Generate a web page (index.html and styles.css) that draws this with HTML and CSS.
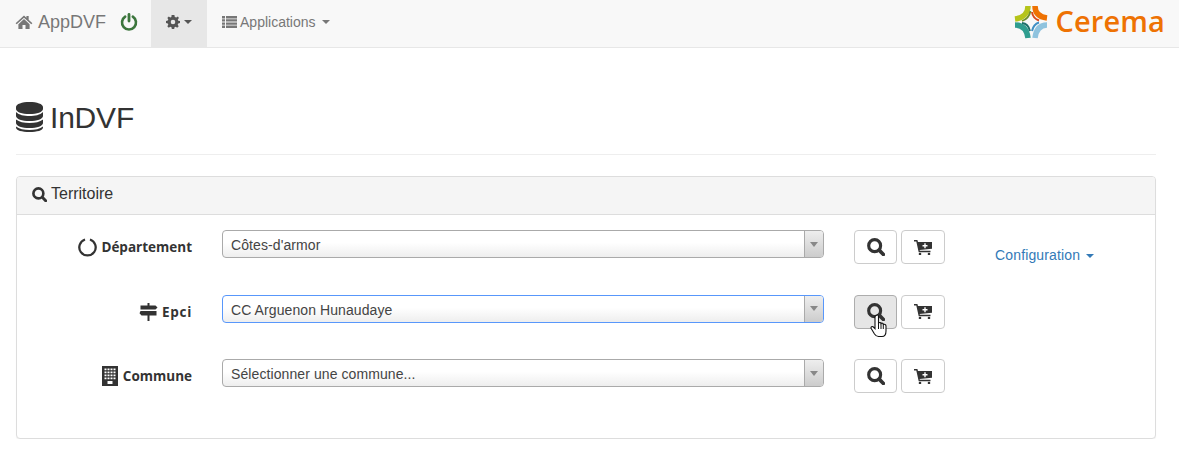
FILE: index.html
```html
<!DOCTYPE html>
<html lang="fr">
<head>
<meta charset="utf-8">
<title>InDVF</title>
<link rel="stylesheet" href="styles.css">
</head>
<body>
<nav class="navbar">
  <a class="brand">
    <svg class="ico-home" viewBox="0 0 18 15"><path d="M9 0.5 L11.6 2.9 V1.2 H14 V5.1 L18 8.8 L16.8 10 L9 3 L1.2 10 L0 8.8 Z M3 9.8 L9 4.4 L15 9.8 V15 H10.6 V10.8 H7.4 V15 H3 Z"/></svg>
    <span>AppDVF</span>
  </a>
  <svg class="ico-power" viewBox="0 0 18 18"><path d="M5.2 3.6 A7 7 0 1 0 12.8 3.6" fill="none" stroke="#3c763d" stroke-width="2.6" stroke-linecap="round"/><path d="M9 1.4 V8" fill="none" stroke="#3c763d" stroke-width="2.8" stroke-linecap="round"/></svg>
  <a class="nav-item active">
    <svg class="ico-gear" viewBox="0 0 14 14"><path fill-rule="evenodd" d="M5.6 0 H8.4 L8.8 1.9 L10.3 2.5 L11.9 1.5 L12.9 3 L11.8 4.5 L12.2 5.7 L14 6 V8.1 L12.2 8.5 L11.7 9.8 L12.7 11.3 L11.2 12.7 L9.7 11.7 L8.5 12.2 L8.2 14 H5.8 L5.5 12.2 L4.2 11.7 L2.8 12.7 L1.3 11.2 L2.3 9.7 L1.8 8.5 L0 8.1 V5.9 L1.8 5.6 L2.3 4.3 L1.3 2.9 L2.8 1.4 L4.2 2.4 L5.4 1.9 Z M7 4.7 A2.3 2.3 0 1 0 7 9.3 A2.3 2.3 0 1 0 7 4.7 Z"/></svg>
    <span class="caret"></span>
  </a>
  <a class="nav-item apps">
    <svg class="ico-list" viewBox="0 0 15 12"><path d="M0 0H3V2.4H0Z M4 0H15V2.4H4Z M0 3.2H3V5.6H0Z M4 3.2H15V5.6H4Z M0 6.4H3V8.8H0Z M4 6.4H15V8.8H4Z M0 9.6H3V12H0Z M4 9.6H15V12H4Z"/></svg>
    <span>Applications</span>
    <span class="caret"></span>
  </a>
  <div class="logo">
    <svg class="logo-mark" viewBox="0 0 34 35" fill="none">
      <path d="M14 2 C14 9 9 14 1 15" stroke="#b5c41a" stroke-width="5.5"/>
      <path d="M16.5 7 C15.5 12 12.5 15.5 8 17" stroke="#6f8f2a" stroke-width="1.8"/>
      <path d="M21 2 C21 9 25 13 33 14" stroke="#ee7203" stroke-width="5.5"/>
      <path d="M18 8 C18.5 12 21 15 25 16.5" stroke="#d9481c" stroke-width="2"/>
      <path d="M1 21 C9 21 13 26 14 34" stroke="#2f9d8f" stroke-width="5.5"/>
      <path d="M8 19 C12 19.5 15 22.5 16 27" stroke="#1d6f6a" stroke-width="1.8"/>
      <path d="M33 21 C26 21 22 26 21 34" stroke="#8fc3de" stroke-width="5.5"/>
      <path d="M25 18.5 C21.5 19.5 19 22.5 18 27" stroke="#3f8fc4" stroke-width="2"/>
    </svg>
    <span class="logo-text">Cerema</span>
  </div>
</nav>

<main class="page">
  <header class="page-header">
    <svg class="ico-db" viewBox="0 0 27 30"><path d="M13.5 0 C21 0 27 2 27 5 V7 C27 10 21 12 13.5 12 C6 12 0 10 0 7 V5 C0 2 6 0 13.5 0 Z M0 10 C3 13 8 14 13.5 14 C19 14 24 13 27 10 V14 C27 17 21 19 13.5 19 C6 19 0 17 0 14 Z M0 17.5 C3 20 8 21 13.5 21 C19 21 24 20 27 17.5 V21 C27 24 21 26 13.5 26 C6 26 0 24 0 21 Z M0 24.5 C3 27 8 28 13.5 28 C19 28 24 27 27 24.5 V25.5 C27 28.5 21 30 13.5 30 C6 30 0 28.5 0 25.5 Z"/></svg>
    <h1>InDVF</h1>
  </header>

  <section class="panel">
    <div class="panel-heading">
      <svg class="ico-search small" viewBox="0 0 16 16"><circle cx="6.8" cy="6.8" r="5.3" fill="none" stroke-width="2.8"/><path d="M11 11 L14.6 14.6" fill="none" stroke-width="3.2" stroke-linecap="round"/></svg>
      <span>Territoire</span>
    </div>
    <div class="panel-body">
      <div class="rows">
        <div class="row">
          <label class="row-label">
            <svg class="ico-dept" viewBox="0 0 20 20"><path d="M7.4 1.6 A8.6 8.6 0 1 0 12.6 1.6" fill="none" stroke="#333" stroke-width="2.4"/></svg>
            <span>Département</span>
          </label>
          <div class="select"><span class="select-value">Côtes-d'armor</span><span class="select-arrow"><i></i></span></div>
          <div class="actions">
            <button class="btn"><svg class="ico-search" viewBox="0 0 16 16"><circle cx="6.8" cy="6.8" r="5.3" fill="none" stroke-width="2.8"/><path d="M11 11 L14.6 14.6" fill="none" stroke-width="3.2" stroke-linecap="round"/></svg></button>
            <button class="btn"><svg class="ico-cart" viewBox="0 0 18 15"><path fill-rule="evenodd" d="M0 0 H3.4 L4 2 H18 V8.8 L5.6 10 L5.9 10.8 H16.5 V12.3 H4.7 L2.3 1.5 H0 Z M10.3 3.2 V5 H8.5 V6.4 H10.3 V8.2 H11.7 V6.4 H13.5 V5 H11.7 V3.2 Z"/><circle cx="6" cy="14" r="1.3"/><circle cx="15" cy="14" r="1.3"/></svg></button>
          </div>
          <a class="config">Configuration<span class="caret"></span></a>
        </div>
        <div class="row">
          <label class="row-label">
            <svg class="ico-sign" viewBox="0 0 18 18"><path d="M8 0H10V2.5H16L18 4.5L16 6.5H1V2.5H8Z M1 8H17V12.5H10V18H8V12.5H2L0 10.2Z"/></svg>
            <span class="epci">Epci</span>
          </label>
          <div class="select focus"><span class="select-value">CC Arguenon Hunaudaye</span><span class="select-arrow"><i></i></span></div>
          <div class="actions">
            <button class="btn hover"><svg class="ico-search" viewBox="0 0 16 16"><circle cx="6.8" cy="6.8" r="5.3" fill="none" stroke-width="2.8"/><path d="M11 11 L14.6 14.6" fill="none" stroke-width="3.2" stroke-linecap="round"/></svg>
              <svg class="cursor" viewBox="0 0 18 24"><path d="M6 1.5 C7 .5 8.5 1 8.5 2.5 V9 C9.5 8 11 8.5 11 9.5 C12 8.8 13.2 9.3 13.3 10.4 C14.5 9.9 16 10.6 16 12 V17 C16 20 14.5 22.5 12 22.5 H8.5 C6.5 22.5 5.5 21.5 4.5 20 L1.2 14.5 C.4 13 2.2 11.8 3.4 13 L5 14.7 V3 C5 2.4 5.4 1.8 6 1.5 Z" fill="#fff" stroke="#111" stroke-width="1.1"/><path d="M8.5 9V15 M11 9.5V15 M13.3 10.4V15" stroke="#111" stroke-width="1" fill="none"/></svg>
            </button>
            <button class="btn"><svg class="ico-cart" viewBox="0 0 18 15"><path fill-rule="evenodd" d="M0 0 H3.4 L4 2 H18 V8.8 L5.6 10 L5.9 10.8 H16.5 V12.3 H4.7 L2.3 1.5 H0 Z M10.3 3.2 V5 H8.5 V6.4 H10.3 V8.2 H11.7 V6.4 H13.5 V5 H11.7 V3.2 Z"/><circle cx="6" cy="14" r="1.3"/><circle cx="15" cy="14" r="1.3"/></svg></button>
          </div>
        </div>
        <div class="row">
          <label class="row-label">
            <svg class="ico-building" viewBox="0 0 16 20"><path fill-rule="evenodd" d="M0 0H16V20H0Z M2.5 2.5V4.2H4.5V2.5Z M5.5 2.5V4.2H7.5V2.5Z M8.5 2.5V4.2H10.5V2.5Z M11.5 2.5V4.2H13.5V2.5Z M2.5 5.5V7.2H4.5V5.5Z M5.5 5.5V7.2H7.5V5.5Z M8.5 5.5V7.2H10.5V5.5Z M11.5 5.5V7.2H13.5V5.5Z M2.5 8.5V10.2H4.5V8.5Z M5.5 8.5V10.2H7.5V8.5Z M8.5 8.5V10.2H10.5V8.5Z M11.5 8.5V10.2H13.5V8.5Z M2.5 11.5V13.2H4.5V11.5Z M5.5 11.5V13.2H7.5V11.5Z M8.5 11.5V13.2H10.5V11.5Z M11.5 11.5V13.2H13.5V11.5Z M5.5 15V18H10.5V15Z"/></svg>
            <span>Commune</span>
          </label>
          <div class="select"><span class="select-value">Sélectionner une commune...</span><span class="select-arrow"><i></i></span></div>
          <div class="actions">
            <button class="btn"><svg class="ico-search" viewBox="0 0 16 16"><circle cx="6.8" cy="6.8" r="5.3" fill="none" stroke-width="2.8"/><path d="M11 11 L14.6 14.6" fill="none" stroke-width="3.2" stroke-linecap="round"/></svg></button>
            <button class="btn"><svg class="ico-cart" viewBox="0 0 18 15"><path fill-rule="evenodd" d="M0 0 H3.4 L4 2 H18 V8.8 L5.6 10 L5.9 10.8 H16.5 V12.3 H4.7 L2.3 1.5 H0 Z M10.3 3.2 V5 H8.5 V6.4 H10.3 V8.2 H11.7 V6.4 H13.5 V5 H11.7 V3.2 Z"/><circle cx="6" cy="14" r="1.3"/><circle cx="15" cy="14" r="1.3"/></svg></button>
          </div>
        </div>
      </div>
    </div>
  </section>
</main>
</body>
</html>
```
FILE: styles.css
```css
* { box-sizing: border-box; }
html, body { margin: 0; padding: 0; }
body {
  background: #fff;
  color: #333;
  font-family: "Liberation Sans", Arial, sans-serif;
  font-size: 14px;
  line-height: 20px;
  overflow: hidden;
}
svg { display: block; flex: none; }

.navbar {
  display: flex;
  align-items: stretch;
  height: 48px;
  background: #f8f8f8;
  border-bottom: 1px solid #e7e7e7;
  color: #777;
}
.brand {
  display: flex;
  align-items: center;
  gap: 5px;
  padding: 0 0 4px 16px;
  font-size: 18px;
}
.ico-home { width: 18px; height: 14px; fill: #777; margin-left: -1px; }
.ico-power { width: 18px; height: 18px; margin: 13px 0 0 14px; }
.nav-item {
  display: flex;
  align-items: center;
  padding: 0 15px 4px;
  margin-left: 13px;
}
.nav-item.active { background: #e7e7e7; color: #555; }
.nav-item.apps { margin-left: 0; }
.nav-item.apps span:first-of-type { margin-left: 3px; }
.ico-gear { width: 14px; height: 14px; fill: #555; }
.ico-list { width: 15px; height: 12px; fill: #777; }
.caret {
  display: inline-block;
  width: 0;
  height: 0;
  margin-left: 4px;
  border-top: 4px solid currentColor;
  border-left: 4px solid transparent;
  border-right: 4px solid transparent;
}
.nav-item.apps .caret { margin-left: 6px; }
.logo {
  display: flex;
  align-items: center;
  gap: 8px;
  margin-left: auto;
  padding: 0 14px 5px 0;
}
.logo-mark { width: 34px; height: 35px; }
.logo-text {
  color: #ee7203;
  font-family: "Open Sans", sans-serif;
  font-size: 29px;
  font-weight: 600;
  line-height: 34px;
  letter-spacing: .1px;
}

.page { padding: 0 23px 0 16px; }
.page-header {
  display: flex;
  align-items: center;
  gap: 7px;
  height: 107px;
  padding-top: 32px;
  border-bottom: 1px solid #eee;
}
.ico-db { width: 27px; height: 30px; fill: #333; }
h1 {
  margin: 0;
  font-size: 30px;
  font-weight: 400;
  line-height: 33px;
  letter-spacing: -.2px;
}

.panel {
  margin-top: 21px;
  height: 263px;
  background: #fff;
  border: 1px solid #ddd;
  border-radius: 4px;
  box-shadow: 0 1px 1px rgba(0,0,0,.05);
}
.panel-heading {
  display: flex;
  align-items: center;
  gap: 4px;
  height: 38px;
  padding: 0 15px 3px;
  font-size: 16px;
  background: #f5f5f5;
  border-bottom: 1px solid #ddd;
  border-radius: 3px 3px 0 0;
}
.ico-search { width: 15px; height: 15px; stroke: #333; }
.panel-body { padding-top: 15px; }
.rows { display: flex; flex-direction: column; gap: 30.5px; }
.row {
  display: flex;
  align-items: flex-start;
  height: 34px;
}
.row-label {
  display: flex;
  align-items: center;
  justify-content: flex-end;
  gap: 4px;
  width: 175px;
  height: 34px;
  font-family: "Open Sans", sans-serif;
  font-weight: 700;
  font-size: 13.5px;
}
.epci { letter-spacing: .7px; }
.ico-dept { width: 19px; height: 19px; }
.ico-sign { width: 19px; height: 18px; fill: #333; }
.ico-building { width: 16px; height: 20px; margin-right: 1px; fill: #333; }
.select {
  display: flex;
  align-items: stretch;
  width: 602px;
  height: 28px;
  margin-left: 30px;
  border: 1px solid #aaa;
  border-radius: 4px;
  background: linear-gradient(#fff 45%, #eee);
}
.select.focus { border-color: #5897fb; }
.select-value { flex: 1; padding: 0 8px; line-height: 28px; color: #444; letter-spacing: .09px; }
.select-arrow {
  display: flex;
  align-items: center;
  justify-content: center;
  width: 19px;
  border-left: 1px solid #aaa;
  border-radius: 0 3px 3px 0;
  background: linear-gradient(#eee, #ccc);
}
.select-arrow i {
  width: 0;
  height: 0;
  border-top: 5px solid #888;
  border-left: 4px solid transparent;
  border-right: 4px solid transparent;
}
.actions { display: flex; gap: 4px; margin-left: 30px; }
.btn {
  position: relative;
  display: flex;
  align-items: center;
  justify-content: center;
  width: 43px;
  height: 34px;
  padding: 0;
  background: #fff;
  border: 1px solid #ccc;
  border-radius: 4px;
}
.btn + .btn { width: 44px; }
.btn .ico-search { width: 18px; height: 18px; }
.btn.hover { background: #e6e6e6; border-color: #adadad; }
.ico-cart { width: 18px; height: 15px; fill: #333; }
.cursor { position: absolute; left: 15px; top: 18px; width: 18px; height: 24px; }
.config {
  margin: 15px 0 0 50px;
  color: #337ab7;
  white-space: nowrap;
  letter-spacing: .15px;
}
.config .caret { margin-left: 6px; vertical-align: middle; }
```
